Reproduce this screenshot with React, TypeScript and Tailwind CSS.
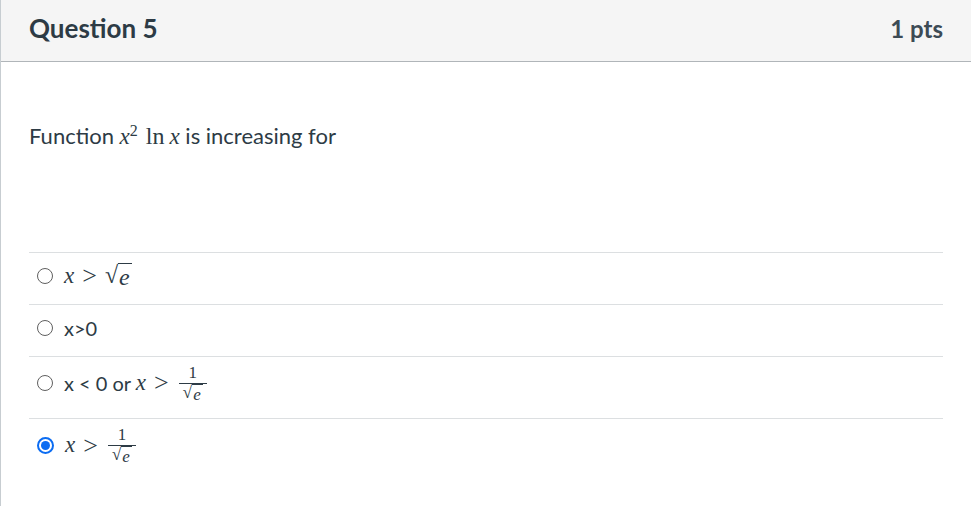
import React from "react";

const math = "font-['Liberation_Serif','DejaVu_Serif',serif]";

function Radio({ checked }: { checked?: boolean }) {
  if (checked) {
    return (
      <span className="flex h-[17px] w-[17px] shrink-0 items-center justify-center rounded-full border-[2px] border-[#0b6cf2] bg-white">
        <span className="h-[9px] w-[9px] rounded-full bg-[#0b6cf2]" />
      </span>
    );
  }
  return <span className="h-[16px] w-[16px] shrink-0 rounded-full border-[1.5px] border-[#5f5f5f] bg-white" />;
}

function X() {
  return <span className={`${math} text-[23px] italic`}>x</span>;
}

function Gt() {
  return <span className={`${math} mx-[8px] text-[26px] leading-none`}>&gt;</span>;
}

function Sqrt({ small }: { small?: boolean }) {
  return (
    <span className={`inline-flex items-start ${math} ${small ? "text-[17px]" : "text-[24px]"}`}>
      <span className="leading-none">√</span>
      <span className="border-t border-[#2d3b45] pl-[1px] pr-[2px] pt-[1px] italic leading-none">e</span>
    </span>
  );
}

function Frac() {
  return (
    <span className={`ml-[2px] inline-flex flex-col items-center ${math} leading-none`}>
      <span className="px-[3px] pb-[2px] text-[17px]">1</span>
      <span className="h-px w-[28px] bg-[#2d3b45]" />
      <Sqrt small />
    </span>
  );
}

export default function App() {
  return (
    <div className="h-[506px] w-[971px] border-l border-[#c7cdd1] bg-white font-['Lato','Noto_Sans',sans-serif] text-[#2d3b45]">
      <div className="flex h-[62px] items-center justify-between border-b border-[#b0b5b9] bg-[#f5f5f5] px-[28px]">
        <h2 className="pb-[4px] text-[26px] font-bold">Question 5</h2>
        <span className="pb-[4px] text-[24px] font-bold text-[#3d4b55]">1 pts</span>
      </div>

      <div className="px-[28px]">
        <p className="pt-[56px] text-[22px]">
          Function{" "}
          <X />
          <sup className={`${math} text-[16px]`}>2</sup>
          <span className={`${math} ml-[8px] mr-[5px] text-[24px]`}>ln</span>
          <X /> is increasing for
        </p>

        <div className="mt-[97px] border-t border-[#dcdfe1]">
          <div className="flex h-[52px] items-center gap-[11px] border-b border-[#dcdfe1] pb-[4px] pl-[8px]">
            <Radio />
            <span className="flex items-center">
              <X />
              <Gt />
              <Sqrt />
            </span>
          </div>
          <div className="flex h-[52px] items-center gap-[11px] border-b border-[#dcdfe1] pb-[4px] pl-[8px] text-[20px]">
            <Radio />
            <span>x&gt;0</span>
          </div>
          <div className="flex h-[62px] items-center gap-[11px] border-b border-[#dcdfe1] pb-[8px] pl-[8px] text-[20px]">
            <Radio />
            <span className="flex items-center">
              <span>x &lt; 0 or&nbsp;</span>
              <X />
              <Gt />
              <Frac />
            </span>
          </div>
          <div className="flex h-[62px] items-center gap-[11px] pb-[8px] pl-[8px]">
            <Radio checked />
            <span className="flex items-center">
              <X />
              <Gt />
              <Frac />
            </span>
          </div>
        </div>
      </div>
    </div>
  );
}
